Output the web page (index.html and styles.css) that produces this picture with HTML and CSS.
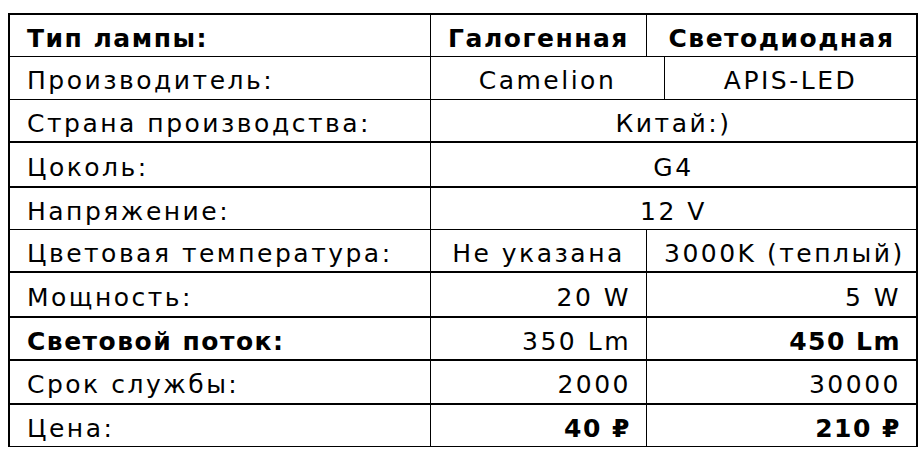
FILE: index.html
```html
<!DOCTYPE html>
<html lang="ru">
<head>
<meta charset="utf-8">
<title>Сравнение ламп</title>
<link rel="stylesheet" href="styles.css">
</head>
<body>
<table class="cmp">
  <colgroup>
    <col class="c-label">
    <col class="c-a">
    <col class="c-gap">
    <col class="c-b">
  </colgroup>
  <tbody>
    <tr class="r1 thin">
      <td class="label bold">Тип лампы:</td>
      <td class="center bold">Галогенная</td>
      <td class="center bold" colspan="2">Светодиодная</td>
    </tr>
    <tr class="r2 thin">
      <td class="label">Производитель:</td>
      <td class="center" colspan="2">Camelion</td>
      <td class="center">APIS-LED</td>
    </tr>
    <tr class="r3 thick">
      <td class="label">Страна производства:</td>
      <td class="center" colspan="3">Китай:)</td>
    </tr>
    <tr class="r4 thick">
      <td class="label">Цоколь:</td>
      <td class="center" colspan="3">G4</td>
    </tr>
    <tr class="r5 thin">
      <td class="label">Напряжение:</td>
      <td class="center" colspan="3">12 V</td>
    </tr>
    <tr class="r6 thick">
      <td class="label">Цветовая температура:</td>
      <td class="center">Не указана</td>
      <td class="center" colspan="2">3000K (теплый)</td>
    </tr>
    <tr class="r7 thick">
      <td class="label">Мощность:</td>
      <td class="right">20 W</td>
      <td class="right" colspan="2">5 W</td>
    </tr>
    <tr class="r8 thick">
      <td class="label bold">Световой поток:</td>
      <td class="right">350 Lm</td>
      <td class="right bold" colspan="2">450 Lm</td>
    </tr>
    <tr class="r9 thick">
      <td class="label">Срок службы:</td>
      <td class="right">2000</td>
      <td class="right" colspan="2">30000</td>
    </tr>
    <tr class="r10 thin">
      <td class="label">Цена:</td>
      <td class="right bold">40 ₽</td>
      <td class="right bold" colspan="2">210 ₽</td>
    </tr>
  </tbody>
</table>
</body>
</html>
```

FILE: styles.css
```css
html, body {
  margin: 0;
  padding: 0;
  background: #ffffff;
}

body {
  padding: 13px 0 0 8px;
  font-family: "DejaVu Sans", "Liberation Sans", sans-serif;
  color: #000000;
}

.cmp {
  border-collapse: separate;
  border-spacing: 0;
  table-layout: fixed;
  width: 908px;
  border-top: 2px solid #000;
  border-left: 2px solid #000;
}

.c-label { width: 421px; }
.c-a { width: 216px; }
.c-gap { width: 18px; }
.c-b { width: 253px; }

.cmp td {
  box-sizing: border-box;
  padding: 6px 17px 0 17px;
  border-right: 1px solid #000;
  font-size: 25px;
  line-height: 28px;
  white-space: nowrap;
  vertical-align: middle;
  letter-spacing: 2.5px;
}

.cmp td.right {
  padding-right: 15px;
}

.cmp td.bold {
  letter-spacing: 1.5px;
}

.cmp td:last-child {
  border-right-width: 2px;
}

.thin td { border-bottom: 1px solid #000; }
.thick td { border-bottom: 2px solid #000; }

.r1 td { height: 42px; }
.r2 td { height: 43px; }
.r3 td { height: 43px; }
.r4 td { height: 45px; }
.r5 td { height: 42px; }
.r6 td { height: 43px; }
.r7 td { height: 45px; }
.r8 td { height: 43px; }
.r9 td { height: 44px; }
.r10 td { height: 42px; }

.label { text-align: left; }
.center { text-align: center; }
.right { text-align: right; }
.bold { font-weight: bold; }
```
